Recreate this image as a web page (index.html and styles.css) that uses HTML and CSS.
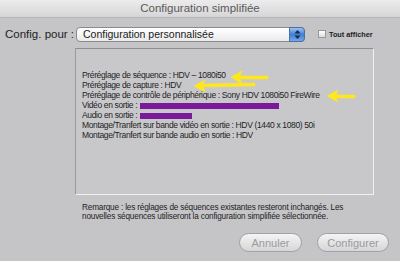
FILE: index.html
```html
<!DOCTYPE html>
<html><head><meta charset="utf-8"><link rel="stylesheet" href="styles.css"></head>
<body>
<div class="win">
  <div class="titlebar">Configuration simplifiée</div>
  <div class="toprow">
    <span class="label">Config. pour :</span>
    <div class="popup">
      <span class="popup-text">Configuration personnalisée</span>
      <span class="stepper"><svg width="9" height="11" viewBox="0 0 9 11"><path d="M4.5 1 L7.5 4.5 H1.5Z M4.5 10 L7.5 6.5 H1.5Z" fill="#1a2a44"/></svg></span>
    </div>
    <label class="check"><span class="box"></span>Tout afficher</label>
  </div>
  <div class="panel">
    <div class="line">Préréglage de séquence : HDV – 1080i50</div>
    <div class="line">Préréglage de capture : HDV</div>
    <div class="line">Préréglage de contrôle de périphérique : Sony HDV 1080i50 FireWire</div>
    <div class="line">Vidéo en sortie : <span class="redact r1"></span></div>
    <div class="line">Audio en sortie : <span class="redact r2"></span></div>
    <div class="line">Montage/Tranfert sur bande vidéo en sortie : HDV (1440 x 1080) 50i</div>
    <div class="line">Montage/Tranfert sur bande audio en sortie : HDV</div>
    <svg class="arrows" width="400" height="261" viewBox="0 0 400 261">
      <g fill="#ffe81a" stroke="#ffe81a">
        <path d="M231 76 L242 70 L240 75 L268 75 L268 78 L240 78 L242 83Z" stroke-width="0.5"/>
        <path d="M194 85 L205 79 L203 83 L255 82 L255 85 L203 86 L205 91Z" stroke-width="0.5"/>
        <path d="M327 95 L338 89 L336 94 L355 94 L355 97 L336 97 L338 101Z" stroke-width="0.5"/>
      </g>
    </svg>
  </div>
  <p class="note">Remarque : les réglages de séquences existantes resteront inchangés. Les nouvelles séquences utiliseront la configuration simplifiée sélectionnée.</p>
  <div class="buttons">
    <button class="btn">Annuler</button>
    <button class="btn">Configurer</button>
  </div>
</div>
</body></html>
```
FILE: styles.css
```css
html, body { margin: 0; padding: 0; }
body { width: 400px; height: 261px; overflow: hidden; background: #c5c5c8; font-family: "Liberation Sans", Arial, sans-serif; color: #1e1e1e; }
.win { width: 400px; height: 261px; display: flex; flex-direction: column; background: #c5c5c8; }
.titlebar { height: 17px; line-height: 16px; text-align: center; font-size: 11.5px; color: #5a5a5a; background: linear-gradient(#ececec, #d6d6d8); border-bottom: 1px solid #b6b6b8; }
.toprow { display: flex; align-items: center; height: 22px; margin-top: 5px; padding-left: 5px; }
.label { font-size: 11.5px; width: 71px; color: #222; white-space: nowrap; }
.popup { width: 229px; height: 15px; box-sizing: border-box; border: 1px solid #8a8a8c; border-radius: 4px; background: linear-gradient(#ffffff, #ebebeb); display: flex; align-items: center; justify-content: space-between; padding-left: 6px; }
.popup-text { font-size: 10.5px; color: #1a1a1a; }
.stepper { width: 16px; height: 15px; margin-right: -1px; border-radius: 0 4px 4px 0; background: linear-gradient(#9fc3f0, #3f7fd6 50%, #74a8ea); display: flex; align-items: center; justify-content: center; border: 1px solid #4a6ea6; box-sizing: border-box; }
.check { display: flex; align-items: center; font-size: 7.3px; font-weight: bold; margin-left: 13px; color: #222; white-space: nowrap; }
.box { width: 6px; height: 6px; background: linear-gradient(#fff, #ddd); border: 1px solid #999; margin-right: 3px; }
.panel { position: relative; margin-left: 75px; width: 299px; height: 147px; box-sizing: border-box; border: 1px solid #f0f0f0; border-top-color: #8e8e8e; border-left-color: #9a9a9a; background: #c8c8cb; padding: 21px 0 0 6px; margin-top: 3px; }
.line { font-size: 8.5px; letter-spacing: -0.36px; line-height: 10px; height: 10px; color: #1e1e1e; white-space: nowrap; }
.redact { display: inline-block; height: 6px; background: #7a1a9a; vertical-align: -1px; margin-left: 1px; }
.r1 { width: 139px; }
.r2 { width: 52px; }
.arrows { position: absolute; left: -76px; top: -48px; pointer-events: none; }
.note { margin: 8px 0 0 82px; width: 264px; font-size: 8.2px; letter-spacing: -0.17px; line-height: 9px; color: #222; }
.buttons { display: flex; justify-content: flex-end; gap: 15px; padding-right: 11px; margin-top: 12px; }
.btn { height: 19px; box-sizing: border-box; border: 1px solid #a2a2a4; border-radius: 10px; background: linear-gradient(#f4f4f4, #d6d6d8); color: #9a9a9a; font-family: inherit; font-size: 11px; padding: 0; }
.btn:first-child { width: 63px; }
.btn:last-child { width: 72px; }
```
